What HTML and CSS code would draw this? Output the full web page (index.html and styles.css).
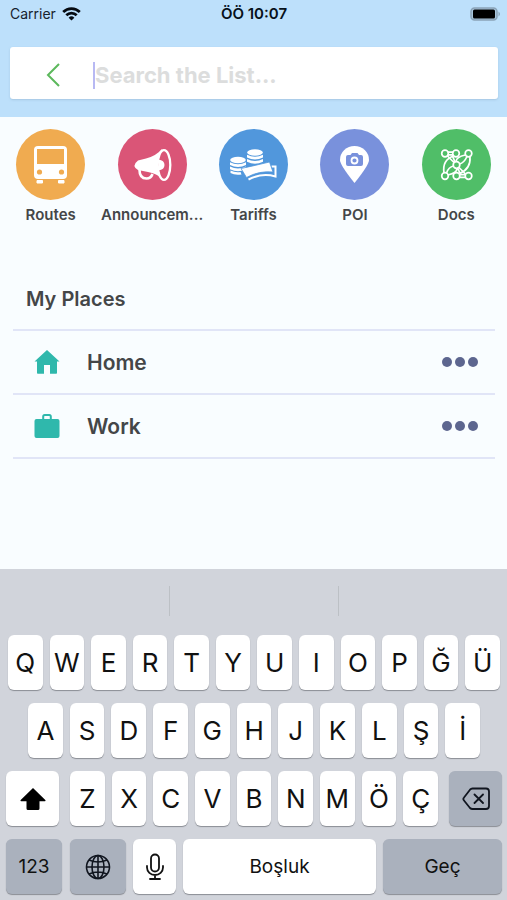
FILE: index.html
```html
<!DOCTYPE html>
<html lang="tr">
<head>
<meta charset="utf-8">
<meta name="viewport" content="width=device-width, initial-scale=1">
<title>Search</title>
<link rel="stylesheet" href="styles.css">
</head>
<body>
<header class="header">
  <div class="status">
    <div class="status-left">
      <span>Carrier</span>
      <svg width="19" height="14" viewBox="0 0 19 14" fill="none" stroke="#050a10" stroke-width="2.7"><path d="M1.2 5a11.8 11.8 0 0 1 16.6 0M4.3 8.2a7.4 7.4 0 0 1 10.4 0"/><path d="M9.500 13.600 6.600 10.700a4.200 4.200 0 0 1 5.800 0z" fill="#050a10" stroke="none"/></svg>
    </div>
    <strong class="status-time">ÖÖ 10:07</strong>
    <div class="status-right">
      <svg width="31" height="14" viewBox="0 0 31 14"><rect x="1" y="1" width="26" height="12" rx="3.500" fill="#a9c6dc" stroke="#8aa3b8" stroke-width="1.500"/><rect x="3" y="2.500" width="22" height="9" rx="1.500" fill="#000"/><path d="M28.500 4.500q3 2.500 0 5z" fill="#8aa3b8"/></svg>
    </div>
  </div>
  <form class="search">
    <button class="back" type="button" aria-label="Back">
      <svg width="14" height="24" viewBox="0 0 14 24" fill="none" stroke="#5cb85c" stroke-width="2"><path d="M13 1 2 12l11 11"/></svg>
    </button>
    <span class="caret"></span>
    <input class="field" type="text" aria-label="Search the List" placeholder="Search the List...">
  </form>
</header>

<main class="content">
  <nav class="categories">
    <a class="category" href="#routes">
      <span class="disc orange"><svg width="69" height="71" viewBox="0 0 69 71"><rect x="18" y="17" width="33" height="33" rx="4" fill="#fff"/><path d="M21 20h27v15H21z" fill="#f0ab50"/><circle cx="23.500" cy="43" r="2.600" fill="#f0ab50"/><circle cx="45.500" cy="43" r="2.600" fill="#f0ab50"/><path d="M21 51.500h5.500V54H21zM42.500 51.500H48V54h-5.500z" fill="#fff" stroke="#fff"/></svg></span>
      <span>Routes</span>
    </a>
    <a class="category" href="#announcements">
      <span class="disc pink"><svg width="69" height="71" viewBox="0 0 69 71"><path d="M20 31.500 28 29.500Q38 27 44 20L46 51Q38 44 30 43L20 41Q13 37 20 31.500Z" fill="#fff"/><path d="M21.500 41q0 8.500 7 8.500 4.500 0 6-4.500" fill="none" stroke="#fff" stroke-width="2.600"/><ellipse cx="46" cy="36" rx="6.300" ry="14.800" fill="#da5577" stroke="#fff" stroke-width="2.300"/><path d="M40.500 30.500q6 .8 6 5.500t-6 5.500z" fill="#fff"/></svg></span>
      <span>Announcem...</span>
    </a>
    <a class="category" href="#tariffs">
      <span class="disc blue"><svg width="69" height="71" viewBox="0 0 69 71"><g fill="#fff"><ellipse cx="36" cy="23.500" rx="7.800" ry="3.300"/><path d="M28 25.800q8 4 16 0v2.800q-8 4-16 0zM28 30q8 4 16 0v2.800q-8 4-16 0z"/><ellipse cx="19" cy="31" rx="7.800" ry="3.300"/><path d="M11 33.300q8 4 16 0v2.800q-8 4-16 0zM11 37.500q8 4 16 0v2.800q-8 4-16 0zM11.500 41.500q5 2.500 10 1.500l1 2.500q-7 1-11-1.500z"/></g><path d="M52.500 37.500h4v10Q43 43.500 29.500 50.500" fill="none" stroke="#fff" stroke-width="2"/><path d="M22 39.500q14-3 28.500-6.500l3.500 10q-14-1.500-26.500 5.500z" fill="#fff" stroke="#5197dc" stroke-width=".8"/></svg></span>
      <span>Tariffs</span>
    </a>
    <a class="category" href="#poi">
      <span class="disc violet"><svg width="69" height="71" viewBox="0 0 69 71"><path d="M34.500 54Q20 36 20 31a14.500 14 0 0 1 29 0q0 5-14.500 23z" fill="#fff"/><path d="M28 26h2.500l1.500-2h5.500l1.500 2H41q2 0 2 2v7q0 2-2 2H28q-2 0-2-2v-7q0-2 2-2z" fill="#7991dc"/><circle cx="34.500" cy="31.500" r="3" fill="#7991dc" stroke="#fff" stroke-width="1.800"/></svg></span>
      <span>POI</span>
    </a>
    <a class="category" href="#docs">
      <span class="disc green"><svg width="69" height="71" viewBox="0 0 69 71" fill="none" stroke="#fff" stroke-width="1.700"><circle cx="23" cy="24.500" r="3.300"/><circle cx="34" cy="24.500" r="3.300"/><circle cx="46.500" cy="24.500" r="3.300"/><circle cx="34.500" cy="36" r="3.300"/><circle cx="23" cy="47" r="3.300"/><circle cx="34.500" cy="47" r="3.300"/><circle cx="46.500" cy="47" r="3.300"/><path d="M26 23.200h5M26 25.800h5M37.500 45.700h6M37.500 48.300h6M25.500 27l6.500 6.500M30.500 27l2.500 6M37 38.500l6.500 6.500M36 39.500l2 5M43.300 26Q34 28 34 32.700M45 27.500Q42 34 37.500 35M48 27.500Q49 40 37.500 44.500M22 44Q20 31 31.500 27M24.500 44q2-6 7-7M26 46q9-2 9-6.500"/></svg></span>
      <span>Docs</span>
    </a>
  </nav>

  <section class="places">
    <h1 class="title">My Places</h1>
    <ul class="list">
      <li class="place">
        <svg width="28" height="26" viewBox="0 0 28 26" fill="#2fb8ac"><path d="M14 1 26.500 12.500H24V24q0 .8-.8.8H17V16h-6v8.800H4.800q-.8 0-.8-.8V12.500H1.500z"/></svg>
        <span class="name">Home</span>
        <button class="more" type="button" aria-label="Home options"><i></i><i></i><i></i></button>
      </li>
      <li class="place">
        <svg width="28" height="26" viewBox="0 0 28 26" fill="#2fb8ac"><rect x="1.500" y="6" width="25" height="19" rx="2"/><path d="M10.200 7V3.500q0-1.500 1.500-1.500h4.600q1.500 0 1.500 1.500V7" fill="none" stroke="#2fb8ac" stroke-width="2"/></svg>
        <span class="name">Work</span>
        <button class="more" type="button" aria-label="Work options"><i></i><i></i><i></i></button>
      </li>
    </ul>
  </section>
</main>

<footer class="keyboard">
  <div class="suggestions"><span></span><span></span><span></span></div>
  <div class="row row-top"><button>Q</button><button>W</button><button>E</button><button>R</button><button>T</button><button>Y</button><button>U</button><button>I</button><button>O</button><button>P</button><button>Ğ</button><button>Ü</button></div>
  <div class="row row-middle"><button>A</button><button>S</button><button>D</button><button>F</button><button>G</button><button>H</button><button>J</button><button>K</button><button>L</button><button>Ş</button><button>İ</button></div>
  <div class="row row-bottom">
    <button class="wide" aria-label="Shift"><svg width="28" height="24" viewBox="0 0 28 24"><path d="M14 1 26.300 13q.9 1.200-.6 1.200H20.500v7.300q0 1.500-1.500 1.500H9q-1.500 0-1.500-1.500v-7.300H2.300q-1.500 0-.6-1.200z"/></svg></button>
    <div class="letters"><button>Z</button><button>X</button><button>C</button><button>V</button><button>B</button><button>N</button><button>M</button><button>Ö</button><button>Ç</button></div>
    <button class="wide gray" aria-label="Delete"><svg width="28" height="24" viewBox="0 0 28 24" fill="none" stroke="#10151f" stroke-width="1.800" stroke-linejoin="round" stroke-linecap="round"><path d="M10.500 1.500H24q3 0 3 3v14.500q0 3-3 3H10.500q-1.500 0-2.500-1l-6-7.500q-1.300-1.500 0-3L8 2.700q1-1.200 2.500-1.200zM12.500 7.500l8.500 8.500M21 7.500 12.500 16"/></svg></button>
  </div>
  <div class="row row-space">
    <button class="gray numbers">123</button>
    <button class="gray globe" aria-label="Language"><svg width="26" height="26" viewBox="0 0 26 26" fill="none" stroke="#10151f" stroke-width="1.600"><circle cx="13" cy="13" r="11.500"/><ellipse cx="13" cy="13" rx="6" ry="11.500"/><path d="M13 1.500v23M1.500 13h23M4 6q9 4 18 0M4 20q9-4 18 0"/></svg></button>
    <button class="mic" aria-label="Dictation"><svg width="20" height="28" viewBox="0 0 20 28" fill="none" stroke="#111" stroke-width="1.800" stroke-linecap="round"><rect x="6" y="1.500" width="8" height="17" rx="4"/><path d="M2 13v1.500a8 7.500 0 0 0 16 0V13M10 22v4M5 26h10"/></svg></button>
    <button class="space">Boşluk</button>
    <button class="gray skip">Geç</button>
  </div>
</footer>
</body>
</html>
```
FILE: styles.css
```css
* { box-sizing: border-box; }

body {
  margin: 0;
  min-height: 100vh;
  display: flex;
  flex-direction: column;
  background: #f9fdff;
  color: #444648;
  font-family: Inter, "Liberation Sans", sans-serif;
}

button {
  margin: 0;
  padding: 0;
  border: 0;
  font: inherit;
  color: inherit;
  display: flex;
  align-items: center;
  justify-content: center;
}

svg { display: block; flex: none; }

.header {
  background: #bde0fb;
  padding: 0 9px 18px 10px;
}

.status {
  display: grid;
  grid-template-columns: 1fr auto 1fr;
  align-items: center;
  height: 27px;
  margin-bottom: 20px;
  font-size: 14px;
  color: #17222e;
}

.status-left { display: flex; align-items: center; gap: 6px; }
.status-time { font-size: 15px; font-weight: 600; color: #07111b; }
.status-right { display: flex; justify-content: flex-end; margin-right: -3px; }

.search {
  display: flex;
  align-items: center;
  height: 52px;
  padding: 4px 12px 0 35px;
  border-radius: 3px;
  background: #fff;
  box-shadow: 0 1px 2px #8fb0cc80;
}

.back { width: 16px; background: none; margin-right: 32px; }
.caret { width: 2px; height: 27px; background: #b8b9f3; }

.field {
  flex: 1;
  min-width: 0;
  height: 40px;
  padding: 0;
  border: 0;
  outline: 0;
  background: none;
  font: 700 22px Inter, "Liberation Sans", sans-serif;
}
.field::placeholder { color: #dcdddd; opacity: 1; }

.content { flex: 1; }

.categories {
  display: grid;
  grid-template-columns: repeat(5, minmax(0, 1fr));
  padding-top: 12px;
}

.category {
  display: flex;
  flex-direction: column;
  align-items: center;
  gap: 6px;
  color: inherit;
  text-decoration: none;
  font-size: 15px;
  font-weight: 600;
  line-height: 18px;
}

.disc { width: 69px; height: 71px; border-radius: 50%; }
.orange { background: #f0ab50; }
.pink { background: #da5577; }
.blue { background: #5197dc; }
.violet { background: #7991dc; }
.green { background: #50be68; }

.places { padding: 61px 12px 0 13px; }

.title {
  margin: 0;
  padding: 0 13px 16px;
  font-size: 20px;
  font-weight: 600;
  line-height: 28px;
  border-bottom: 2px solid #e1e5f7;
}

.list { margin: 0; padding: 0; list-style: none; }

.place {
  display: flex;
  align-items: center;
  height: 64px;
  padding: 0 17px 0 20px;
  border-bottom: 2px solid #e1e5f7;
}

.name { flex: 1; margin-left: 26px; font-size: 21px; font-weight: 600; }
.more { gap: 3px; background: none; }
.more i { width: 10px; height: 10px; border-radius: 50%; background: #5d668f; }

.keyboard {
  display: flex;
  flex-direction: column;
  gap: 13px;
  padding-bottom: 6px;
  background: #d1d4db;
  color: #111;
  font-size: 26px;
}

.suggestions {
  display: grid;
  grid-template-columns: repeat(3, 1fr);
  height: 53px;
  padding-top: 17px;
}
.suggestions span { height: 30px; }
.suggestions span + span { border-left: 1px solid #bcc0c5; }

.row { display: flex; gap: 7px; height: 55px; }

.row button {
  flex: 1;
  min-width: 0;
  height: 55px;
  border-radius: 6px;
  background: #fff;
  box-shadow: 0 1px 1px #8a8d94;
}

.row-top { padding: 0 7px 0 8px; }
.row-middle { padding: 0 27px 0 28px; }
.row-bottom { gap: 11px; padding: 0 5px 0 6px; }
.letters { flex: 1; display: flex; gap: 7px; min-width: 0; }
.row .wide { flex: 0 0 53px; }
.row .gray { background: #aab1bd; }
.row-space { padding: 0 5px 0 6px; font-size: 19px; }
.row .numbers, .row .globe { flex: 0 0 56px; }
.row .numbers { margin-right: 1px; }
.row .mic { flex: 0 0 43px; }
.row .skip { flex: 0 0 119px; }
```
